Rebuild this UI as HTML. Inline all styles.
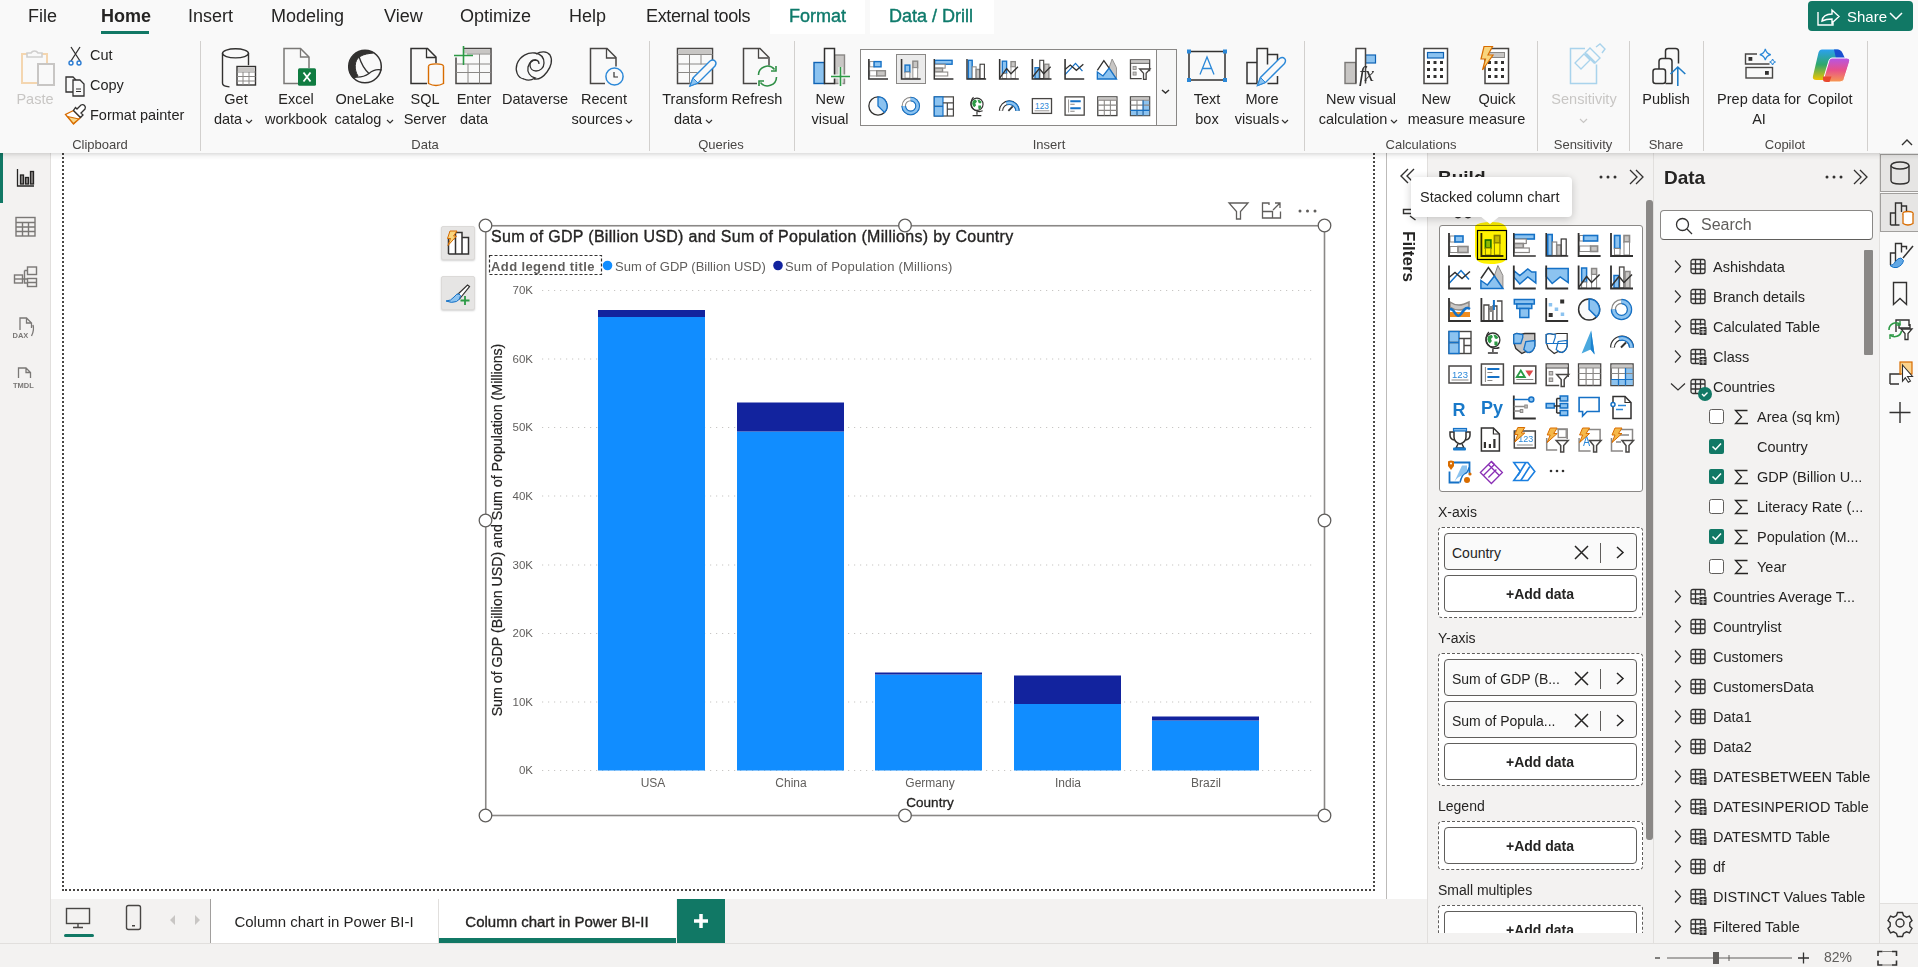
<!DOCTYPE html>
<html><head><meta charset="utf-8">
<style>
*{box-sizing:border-box;margin:0;padding:0}
html,body{width:1918px;height:967px;overflow:hidden;background:#f9f9f9;font-family:"Liberation Sans",sans-serif;color:#252423}
.a{position:absolute}
.t{position:absolute;white-space:nowrap;line-height:1}
.c{transform:translateX(-50%)}
svg{position:absolute;overflow:visible}
.tab{font-size:18px;top:7px;color:#252423}
.bl{font-size:14.5px;color:#252423}
.gl{font-size:13px;color:#484644;margin-top:1px}
.sep{position:absolute;top:41px;width:1px;height:110px;background:#d2d0ce}
.dt{font-size:14.5px;color:#252423}
.pill{background:#fafafa;border:1px solid #605e5c;border-radius:4px}
.add{background:#fff;border:1px solid #605e5c;border-radius:4px}
.chev{fill:none;stroke:#323130;stroke-width:1.2}
</style></head><body>
<!-- ribbon bg -->
<div class="a" style="left:0;top:0;width:1918px;height:153px;background:#f9f9f9"></div>
<div class="a" style="left:770px;top:0;width:95px;height:34px;background:#fff"></div>
<div class="a" style="left:870px;top:0;width:124px;height:34px;background:#fff"></div>
<div class="t tab" style="left:28px">File</div>
<div class="t tab" style="left:101px;font-weight:bold">Home</div>
<div class="a" style="left:101px;top:31px;width:48px;height:3px;background:#117865"></div>
<div class="t tab" style="left:188px">Insert</div>
<div class="t tab" style="left:271px">Modeling</div>
<div class="t tab" style="left:384px">View</div>
<div class="t tab" style="left:460px">Optimize</div>
<div class="t tab" style="left:569px">Help</div>
<div class="t tab" style="left:646px;letter-spacing:-.35px">External tools</div>
<div class="t tab" style="left:789px;color:#0e7a6b;-webkit-text-stroke:.4px #0e7a6b">Format</div>
<div class="t tab" style="left:889px;color:#0e7a6b;-webkit-text-stroke:.4px #0e7a6b">Data / Drill</div>
<!-- share -->
<div class="a" style="left:1808px;top:1px;width:105px;height:30px;background:#117865;border-radius:4px"></div>
<div class="t" style="left:1847px;top:9px;font-size:15px;color:#fff">Share</div>

<!-- separators -->
<div class="sep" style="left:200px"></div>
<div class="sep" style="left:649px"></div>
<div class="sep" style="left:794px"></div>
<div class="sep" style="left:1304px"></div>
<div class="sep" style="left:1537px"></div>
<div class="sep" style="left:1629px"></div>
<div class="sep" style="left:1703px"></div>
<div class="sep" style="left:1867px"></div>

<!-- group labels -->
<div class="t gl c" style="left:100px;top:137px">Clipboard</div>
<div class="t gl c" style="left:425px;top:137px">Data</div>
<div class="t gl c" style="left:721px;top:137px">Queries</div>
<div class="t gl c" style="left:1049px;top:137px">Insert</div>
<div class="t gl c" style="left:1421px;top:137px">Calculations</div>
<div class="t gl c" style="left:1583px;top:137px">Sensitivity</div>
<div class="t gl c" style="left:1666px;top:137px">Share</div>
<div class="t gl c" style="left:1785px;top:137px">Copilot</div>

<!-- button labels -->
<div class="t bl c" style="left:35px;top:92px;color:#c8c6c4">Paste</div>
<div class="t bl" style="left:90px;top:48px">Cut</div>
<div class="t bl" style="left:90px;top:78px">Copy</div>
<div class="t bl" style="left:90px;top:108px">Format painter</div>
<div class="t bl c" style="left:236px;top:92px">Get</div>
<div class="t bl c" style="left:228px;top:112px">data</div>
<div class="t bl c" style="left:296px;top:92px">Excel</div>
<div class="t bl c" style="left:296px;top:112px">workbook</div>
<div class="t bl c" style="left:365px;top:92px">OneLake</div>
<div class="t bl c" style="left:358px;top:112px">catalog</div>
<div class="t bl c" style="left:425px;top:92px">SQL</div>
<div class="t bl c" style="left:425px;top:112px">Server</div>
<div class="t bl c" style="left:474px;top:92px">Enter</div>
<div class="t bl c" style="left:474px;top:112px">data</div>
<div class="t bl c" style="left:535px;top:92px">Dataverse</div>
<div class="t bl c" style="left:604px;top:92px">Recent</div>
<div class="t bl c" style="left:597px;top:112px">sources</div>
<div class="t bl c" style="left:695px;top:92px">Transform</div>
<div class="t bl c" style="left:688px;top:112px">data</div>
<div class="t bl c" style="left:757px;top:92px">Refresh</div>
<div class="t bl c" style="left:830px;top:92px">New</div>
<div class="t bl c" style="left:830px;top:112px">visual</div>
<div class="t bl c" style="left:1207px;top:92px">Text</div>
<div class="t bl c" style="left:1207px;top:112px">box</div>
<div class="t bl c" style="left:1262px;top:92px">More</div>
<div class="t bl c" style="left:1257px;top:112px">visuals</div>
<div class="t bl c" style="left:1361px;top:92px">New visual</div>
<div class="t bl c" style="left:1353px;top:112px">calculation</div>
<div class="t bl c" style="left:1436px;top:92px">New</div>
<div class="t bl c" style="left:1436px;top:112px">measure</div>
<div class="t bl c" style="left:1497px;top:92px">Quick</div>
<div class="t bl c" style="left:1497px;top:112px">measure</div>
<div class="t bl c" style="left:1584px;top:92px;color:#c8c6c4">Sensitivity</div>
<div class="t bl c" style="left:1666px;top:92px">Publish</div>
<div class="t bl c" style="left:1759px;top:92px">Prep data for</div>
<div class="t bl c" style="left:1759px;top:112px">AI</div>
<div class="t bl c" style="left:1830px;top:92px">Copilot</div>

<svg width="1918" height="153" style="left:0;top:0" viewBox="0 0 1918 153">
<defs>
 <linearGradient id="cpA" x1="0" y1="0" x2="0" y2="1"><stop offset="0" stop-color="#2aa0f0"/><stop offset=".5" stop-color="#30a86a"/><stop offset="1" stop-color="#f2c400"/></linearGradient>
 <linearGradient id="cpB" x1="0" y1="0" x2="0" y2="1"><stop offset="0" stop-color="#b455e8"/><stop offset=".5" stop-color="#e8508a"/><stop offset="1" stop-color="#f79a50"/></linearGradient>
</defs>
<g fill="none" stroke-linejoin="miter">
 <!-- Paste -->
 <path d="M22 54h25v29H22z" stroke="#f4d6b0" stroke-width="2"/>
 <path d="M27 57h15v-4h-4a4 4 0 0 0-7 0h-4z" stroke="#d0cfce" stroke-width="1.6" fill="#f9f9f9"/>
 <path d="M38 64h16v21H38z" stroke="#c8c6c4" stroke-width="2" fill="#f9f9f9"/>
 <!-- Cut -->
 <path d="M71 47l9 14M80 47l-9 14" stroke="#323130" stroke-width="1.3"/>
 <circle cx="71" cy="63" r="2" stroke="#2b7cd3" stroke-width="1.4"/>
 <circle cx="79" cy="63" r="2" stroke="#2b7cd3" stroke-width="1.4"/>
 <!-- Copy -->
 <path d="M75 92h-9V77h7l3 3" stroke="#323130" stroke-width="1.3"/>
 <path d="M73 80h7l4 4v12H73z" stroke="#323130" stroke-width="1.3" fill="#f9f9f9"/>
 <path d="M76 89h5M76 91.5h5" stroke="#323130" stroke-width="1"/>
 <!-- Format painter -->
 <path d="M73.5 110.5L65.5 114.5L73.5 124L80.5 117.5z" fill="#fff" stroke="#d86c00" stroke-width="1.3"/>
 <path d="M67.5 116.5L79 119L73.5 123.5z" fill="#f8d98a" stroke="#d86c00" stroke-width="1.1"/>
 <path d="M73.5 110.5l7 7 2.5-2.5-2-2 4-4q1-2-.5-3.5t-3.5-.5l-4 4-1.5-1.5z" stroke="#323130" stroke-width="1.3" fill="#fff"/>
 <!-- Get data -->
 <ellipse cx="235.5" cy="53.3" rx="13" ry="4.6" stroke="#323130" stroke-width="1.4"/>
 <path d="M222.5 53.3v30q0 3 7 3.6M248.5 53.3v12" stroke="#323130" stroke-width="1.4"/>
 <rect x="237" y="66.5" width="18.5" height="18.5" fill="#fff" stroke="#323130" stroke-width="1.4"/>
 <rect x="238" y="67.5" width="16.5" height="3.5" fill="#c8c6c4"/>
 <path d="M237 72h18.5M237 76.5h18.5M237 81h18.5M243 72v13M249 72v13" stroke="#8a8886" stroke-width="1"/>
 <!-- Excel -->
 <path d="M300 83.5h-16V48.5h16.5l8.5 8.5v11" stroke="#7a7876" stroke-width="1.5"/>
 <path d="M300.5 48.5v8.5h8.5" stroke="#7a7876" stroke-width="1.3"/>
 <rect x="298" y="68.3" width="18" height="17.5" rx="1.5" fill="#107c41"/>
 <path d="M303.5 72.5l7 9M310.5 72.5l-7 9" stroke="#fff" stroke-width="1.8"/>
 <!-- OneLake -->
 <circle cx="365" cy="66.5" r="16.3" stroke="#323130" stroke-width="1.5"/>
 <path d="M373.5 52.5A16.5 16.5 0 0 0 353.5 78.2L358 76C354 70 354 60 360 56.5C364 54 369 53.5 373.5 53z" fill="#323130" stroke="#323130" stroke-width="1"/>
 <path d="M359 56.5C361 63 364 69 369 73.5M352 76.5C358 78 364 77 369 73.5C373 70 377 69 381.5 70" stroke="#323130" stroke-width="1.3"/>
 <!-- SQL server -->
 <path d="M427 83.5h-16V48.5h16.5l8.5 8.5v6" stroke="#323130" stroke-width="1.5"/>
 <path d="M426.5 48.5v9h9.5" stroke="#323130" stroke-width="1.3"/>
 <ellipse cx="436" cy="66.5" rx="7.5" ry="2.6" fill="#f9f9f9" stroke="#d86c00" stroke-width="1.4"/>
 <path d="M428.5 66.5v17q7.5 4 15 0v-17" fill="#f9f9f9" stroke="#d86c00" stroke-width="1.4"/>
 <!-- Enter data -->
 <path d="M463 48.5h28v35h-35v-26" stroke="#484644" stroke-width="1.5"/>
 <rect x="463" y="50" width="27" height="3.5" fill="#c8c6c4"/>
 <path d="M467 54h24M456 64h35M456 72.5h35M468 64v19.5M479.5 54v29.5" stroke="#8a8886" stroke-width="1"/>
 <path d="M454 55.5h19M463.5 46v19" stroke="#2c9a45" stroke-width="1.6"/>
 <!-- Dataverse -->
 <path d="M524 79c-7-1-9-9-7-15c3-8 11-12 18-11c6 1 9 5 9 10c0 5-4 8-8 8c-4 0-6-3-6-6s2-5 5-5s4 2 4 4" stroke="#323130" stroke-width="1.3"/>
 <path d="M524 79c4 2 8 1 11-1c-5-1-8-6-7-11c1-5 5-7 8-7M536 54c5-3 11-3 14 1c3 5 1 12-3 17c-3 4-8 8-13 7" stroke="#323130" stroke-width="1.3"/>
 <!-- Recent sources -->
 <path d="M605 83.5h-14.5V48.5h16.5l9 9v9" stroke="#484644" stroke-width="1.5"/>
 <path d="M606.5 48.5v9.5h9.5" stroke="#484644" stroke-width="1.3"/>
 <circle cx="614.5" cy="76.5" r="8.6" fill="#f9f9f9" stroke="#2b88d8" stroke-width="1.5"/>
 <path d="M614 72v5h4" stroke="#323130" stroke-width="1.2"/>
 <!-- Transform data -->
 <rect x="677.5" y="48.5" width="35" height="35" stroke="#484644" stroke-width="1.5"/>
 <rect x="679" y="50" width="32" height="4" fill="#c8c6c4"/>
 <path d="M677.5 54.5h35M677.5 64h30M677.5 72.5h20M689.5 54.5v29M701 54.5v10" stroke="#8a8886" stroke-width="1"/>
 <path d="M690 86l3-8 17-17q3-2 5 0t0 5l-17 17z" fill="#f9f9f9" stroke="#2b88d8" stroke-width="1.4"/>
 <path d="M690 86l3-8l5 5z" fill="#8cc3f0" stroke="#2b88d8" stroke-width="1"/>
 <!-- Refresh -->
 <path d="M757 83.5h-13.5V48.5h16.5l9 9v8" stroke="#484644" stroke-width="1.5"/>
 <path d="M758.5 48.5v9.5h9.5" stroke="#484644" stroke-width="1.3"/>
 <path d="M758.5 75a9 9 0 0 1 16-5.5M776.5 77a9 9 0 0 1-16 5.5" stroke="#2f8f46" stroke-width="1.6"/>
 <path d="M776 66v5h-5M759 86v-5h5" stroke="#2f8f46" stroke-width="1.6"/>
 <!-- New visual -->
 <rect x="814" y="62.5" width="10.5" height="21" fill="#8cc3f0" stroke="#0f63b5" stroke-width="1.4"/>
 <rect x="834.5" y="55" width="10" height="28.5" fill="#c8c6c4" stroke="#8a8886" stroke-width="1.4"/>
 <rect x="824.5" y="48.5" width="10" height="35" fill="#fff" stroke="#323130" stroke-width="1.5"/>
 <path d="M831 76.5h18M840.5 67v19" stroke="#f9f9f9" stroke-width="4"/>
 <path d="M831 76.5h19M840.5 67v19" stroke="#2c9a45" stroke-width="1.6"/>
 <!-- gallery -->
 <rect x="860.5" y="49.5" width="316" height="76" fill="#fff" stroke="#8a8886" stroke-width="1"/>
 <rect x="1157" y="50" width="19" height="75" fill="#f7f7f7"/>
 <path d="M1156.5 49.5v76" stroke="#8a8886" stroke-width="1"/>
 <path d="M1162 90l3.5 3 3.5-3" stroke="#323130" stroke-width="1.5"/>
 <rect x="896.5" y="54.5" width="29" height="29" fill="#ebebeb" stroke="#8a8886" stroke-width="1"/>
 <!-- Text box -->
 <rect x="1189" y="51.5" width="36" height="28.5" stroke="#323130" stroke-width="1.5"/>
 <path d="M1187 49.5h4v4h-4zM1223 49.5h4v4h-4zM1187 78h4v4h-4zM1223 78h4v4h-4z" fill="#2b88d8"/>
 <path d="M1200 74.5l7-17.5 7 17.5M1202.5 68.5h9" stroke="#2b88d8" stroke-width="1.3"/>
 <!-- More visuals -->
 <path d="M1257 83.5h-10V62.5h10M1257 83.5V48.5h10.5v6h10v12M1267.5 54.5v10M1277.5 76v7.5h-10" stroke="#323130" stroke-width="1.5"/>
 <path d="M1257.5 85.5l3-8l19-19q3-2 5 0t0 5l-19 19z" fill="#f9f9f9" stroke="#2b88d8" stroke-width="1.4"/>
 <path d="M1257.5 85.5l3-8l5 5z" fill="#8cc3f0" stroke="#2b88d8" stroke-width="1"/>
 <!-- New visual calc -->
 <rect x="1345" y="62.5" width="11" height="21" fill="#c8c6c4" stroke="#7a7876" stroke-width="1.4"/>
 <rect x="1365.5" y="55" width="10" height="8" fill="#8cc3f0" stroke="#0f63b5" stroke-width="1.2"/>
 <path d="M1356 83.5V48.5h9.5v35" fill="#fff" stroke="#484644" stroke-width="1.5"/>
 <text x="1359" y="81" font-family="Liberation Serif" font-style="italic" font-size="21" fill="#323130" stroke="none">fx</text>
 <!-- New measure -->
 <rect x="1424" y="48.5" width="23.5" height="35" fill="#fff" stroke="#484644" stroke-width="1.5"/>
 <rect x="1427.5" y="52.5" width="16" height="5.5" fill="#8cc3f0" stroke="#0f63b5" stroke-width="1.2"/>
 <path d="M1427 61h3v3h-3zM1433.5 61h3v3h-3zM1440 61h3v3h-3zM1427 68h3v3h-3zM1433.5 68h3v3h-3zM1440 68h3v3h-3zM1427 75h3v3h-3zM1433.5 75h3v3h-3zM1440 75h3v3h-3z" fill="#323130"/>
 <!-- Quick measure -->
 <rect x="1485" y="48.5" width="23.5" height="35" fill="#fff" stroke="#484644" stroke-width="1.5"/>
 <rect x="1488.5" y="52.5" width="16" height="5" fill="#c8c6c4" stroke="#8a8886" stroke-width="1"/>
 <path d="M1488 61h3v3h-3zM1494.5 61h3v3h-3zM1501 61h3v3h-3zM1488 68h3v3h-3zM1494.5 68h3v3h-3zM1501 68h3v3h-3zM1488 75h3v3h-3zM1494.5 75h3v3h-3zM1501 75h3v3h-3z" fill="#323130"/>
 <path d="M1484 46.5h8.5l-4.5 8.5h5l-10.5 15l3-11h-4.5z" fill="#f8d57e" stroke="#d86c00" stroke-width="1.2"/>
 <!-- Sensitivity -->
 <path d="M1585 48.5h-14.5v35h26v-19" stroke="#a9d3ec" stroke-width="1.5"/>
 <path d="M1575 63l9-9 6 6-9 9z" stroke="#a9d3ec" stroke-width="1.3"/>
 <path d="M1585 53l5-5 10 10-5 5zM1596 47l4-3 5 5-3 4" stroke="#a9d3ec" stroke-width="1.4"/>
 <path d="M1586 54l9 9" stroke="#a9d3ec" stroke-width="2.5"/>
 <!-- Publish -->
 <rect x="1653" y="69" width="12.5" height="14.5" rx="2.5" stroke="#323130" stroke-width="1.5"/>
 <path d="M1659 69v-7.5q0-3 3-3h7q3 0 3 3v22M1665.5 58.5v-7.5q0-2.5 3-2.5h7q3 0 3 3v12M1665.5 83.5h7" stroke="#323130" stroke-width="1.5"/>
 <path d="M1677.8 86V67M1670.5 74l7.3-7 7.5 7" stroke="#1f7dc7" stroke-width="1.6"/>
 <!-- Prep data for AI -->
 <path d="M1757 54h-11.5v10h24" stroke="#484644" stroke-width="1.4"/>
 <rect x="1746" y="67.5" width="26.5" height="10.5" stroke="#484644" stroke-width="1.4"/>
 <rect x="1748.5" y="57" width="3.8" height="3.8" fill="#323130"/>
 <rect x="1765" y="71" width="3.8" height="3.8" fill="#323130"/>
 <path d="M1765.3 49c.8 3.5 2 4.8 5.5 5.6c-3.5.8-4.7 2-5.5 5.6c-.8-3.6-2-4.8-5.5-5.6c3.5-.8 4.7-2.1 5.5-5.6z" stroke="#2b88d8" stroke-width="1.2"/>
 <path d="M1772.6 59c.4 2 1 2.6 3 3c-2 .4-2.6 1-3 3c-.4-2-1-2.6-3-3c2-.4 2.6-1 3-3z" stroke="#2b88d8" stroke-width="1.1"/>
 <!-- Copilot -->
 <path d="M1822 49.5H1837Q1841 49.5 1840 53.5L1833.5 77.5Q1832.5 80 1829.5 80H1816.5Q1812 80 1813 76L1818.5 52.5Q1819.5 49.5 1822 49.5z" fill="url(#cpA)"/>
 <path d="M1834 49.5H1837.5Q1841 49.5 1842.5 53L1845 58.5H1836z" fill="#1a4fd0"/>
 <path d="M1832 58H1846.5Q1850.5 58 1849.5 62L1844 79.5Q1843 82 1840 82H1826.5Q1823 82 1823.5 79L1829 60.5Q1830 58 1832 58z" fill="url(#cpB)" stroke="#fff" stroke-width="1"/>
 <path d="M1823 76.5H1831.5L1829.5 82H1826.5Q1822.5 82 1823 78.5z" fill="#e8492f"/>
 <!-- chevron up collapse -->
 <path d="M1902 145l5-5 5 5" stroke="#323130" stroke-width="1.4"/>
 <!-- dropdown chevrons -->
 <path d="M246 120l3 3 3-3M387 120l3 3 3-3M626 120l3 3 3-3M706 120l3 3 3-3M1282 120l3 3 3-3M1391 120l3 3 3-3" stroke="#323130" stroke-width="1.2"/>
 <path d="M1580 119l3.5 3.5 3.5-3.5" stroke="#c8c6c4" stroke-width="1.2"/>
 <!-- share icon -->
 <path d="M1818 12v13h15v-4M1822 21q1-7 10-7v-4l7 6.5-7 6.5v-4q-6 0-10 2z" stroke="#fff" stroke-width="1.4"/>
 <path d="M1890 13l6 6 6-6" stroke="#fff" stroke-width="1.5"/>
</g>
</svg>

<!-- ribbon shadow -->


<!-- left sidebar -->
<div class="a" style="left:0;top:153px;width:51px;height:792px;background:#f3f2f1;border-right:1px solid #e1dfdd"></div>
<div class="a" style="left:0;top:153px;width:3px;height:50px;background:#117865"></div>

<svg width="51" height="260" style="left:0;top:150px" viewBox="0 0 51 260">
 <g fill="none" stroke="#252423" stroke-width="1.3">
  <path d="M17.5 19v17h16.5"/>
  <rect x="20.5" y="25" width="3" height="9" fill="#8a8886"/>
  <rect x="25.5" y="27.5" width="3" height="6.5" fill="#8a8886"/>
  <rect x="30.5" y="21.5" width="3" height="12.5" fill="#8a8886"/>
 </g>
 <g fill="none" stroke="#7a7876" stroke-width="1.4">
  <rect x="16" y="67.5" width="19" height="18.5"/>
  <path d="M16 72.5h19M16 77h19M16 81.5h19M22.5 72.5v13.5M28.5 72.5v13.5"/>
  <g transform="translate(0,8)"><rect x="14.5" y="117" width="8" height="8"/><path d="M14.5 121h8"/><rect x="27.5" y="109" width="9" height="7.5"/><rect x="27.5" y="120.5" width="9" height="8"/><path d="M22.5 121h5M24.5 112.5h3M24.5 112.5v12.5h3M27.5 124.5h9"/></g>
 </g>
 <path d="M20 180v-12h6.5l5 5v5M26.5 168v5h5M33 175q1.5 5-1.5 11" fill="none" stroke="#7a7876" stroke-width="1.3"/>
 <text x="12.5" y="187.5" font-family="Liberation Sans" font-weight="bold" font-size="7.5" fill="#7a7876">DAX</text>
 <path d="M18.5 228v-10h7.5l4.5 4.5v5.5M26 218v4.5h4.5" fill="none" stroke="#7a7876" stroke-width="1.3"/>
 <text x="13" y="237.5" font-family="Liberation Sans" font-weight="bold" font-size="7.5" fill="#7a7876">TMDL</text>
</svg>
<!-- canvas -->
<div class="a" style="left:51px;top:153px;width:1336px;height:746px;background:#fff"></div>
<div class="a" style="left:62px;top:153px;width:1313px;height:738px;border:2px dotted #484644;border-top:none"></div>

<!-- bottom page tabs -->
<div class="a" style="left:51px;top:899px;width:1377px;height:46px;background:#f3f2f1"></div>


<!-- filters pane -->
<div class="a" style="left:1386px;top:153px;width:1px;height:746px;background:#bdbbb9"></div>
<div class="a" style="left:1387px;top:153px;width:40px;height:746px;background:#fff"></div>

<!-- build pane -->
<div class="a" style="left:1427px;top:153px;width:226px;height:792px;background:#f3f2f1;border-left:1px solid #e1dfdd"></div>
<!-- data pane -->
<div class="a" style="left:1653px;top:153px;width:227px;height:792px;background:#f3f2f1;border-left:1px solid #e1dfdd"></div>
<!-- right icon rail -->
<div class="a" style="left:1879px;top:153px;width:39px;height:792px;background:#fafafa;border-left:1px solid #e1dfdd"></div>

<svg width="0" height="0" style="position:absolute;left:0;top:0">
<defs>
<g id="i-sbar" fill="none" stroke-width="1.6">
 <rect x="2" y="3" width="5" height="6" fill="#fff" stroke="#8a8886" stroke-width="1"/>
 <rect x="7" y="3" width="8" height="6" fill="#8cc3f0" stroke="#1571c6"/>
 <rect x="2" y="13.5" width="8" height="6" fill="#fff" stroke="#8a8886" stroke-width="1"/>
 <rect x="10" y="13.5" width="10" height="6" fill="#c8c6c4" stroke="#8a8886"/>
 <path d="M1 0v23h22" stroke="#323130" stroke-width="1.8"/>
</g>
<g id="i-scol" fill="none" stroke-width="1.6">
 <rect x="5" y="7" width="5.5" height="8" fill="#8cc3f0" stroke="#1571c6"/>
 <rect x="5" y="15" width="5.5" height="7" fill="#fff" stroke="#8a8886" stroke-width="1"/>
 <rect x="14" y="2.5" width="5.5" height="7.5" fill="#c8c6c4" stroke="#8a8886"/>
 <rect x="14" y="10" width="5.5" height="12" fill="#fff" stroke="#8a8886" stroke-width="1"/>
 <path d="M1 0v23h22" stroke="#323130" stroke-width="1.8"/>
</g>
<g id="i-cbar" fill="none" stroke-width="1.6">
 <rect x="1.5" y="1.5" width="20" height="4.5" fill="#8cc3f0" stroke="#1571c6"/>
 <rect x="1.5" y="6" width="12" height="4.5" fill="#fff" stroke="#8a8886" stroke-width="1.2"/>
 <rect x="1.5" y="10.5" width="9" height="4.5" fill="#c8c6c4" stroke="#8a8886"/>
 <rect x="1.5" y="15" width="15" height="4.5" fill="#fff" stroke="#8a8886" stroke-width="1.2"/>
 <path d="M1 0v23h22" stroke="#323130" stroke-width="1.6"/>
</g>
<g id="i-ccol" fill="none" stroke-width="1.6">
 <rect x="2.5" y="1.5" width="4.5" height="21" fill="#8cc3f0" stroke="#1571c6"/>
 <rect x="7" y="9" width="4.5" height="13.5" fill="#fff" stroke="#8a8886" stroke-width="1.2"/>
 <rect x="11.5" y="12" width="4.5" height="10.5" fill="#c8c6c4" stroke="#8a8886"/>
 <rect x="16" y="6" width="5" height="16.5" fill="#fff" stroke="#323130" stroke-width="1.2"/>
 <path d="M1 0v23h22" stroke="#323130" stroke-width="1.6"/>
</g>
<g id="i-pbar" fill="none" stroke-width="1.6">
 <rect x="2" y="2.5" width="4" height="5.5" fill="#fff" stroke="#8a8886" stroke-width="1"/>
 <rect x="6" y="2.5" width="14" height="5.5" fill="#8cc3f0" stroke="#1571c6"/>
 <rect x="2" y="13" width="11" height="5.5" fill="#fff" stroke="#8a8886" stroke-width="1"/>
 <rect x="13" y="13" width="7" height="5.5" fill="#c8c6c4" stroke="#8a8886"/>
 <path d="M1 0v23h22" stroke="#323130" stroke-width="1.8"/>
</g>
<g id="i-pcol" fill="none" stroke-width="1.6">
 <rect x="4.5" y="2.5" width="5.5" height="13" fill="#8cc3f0" stroke="#1571c6"/>
 <rect x="4.5" y="15.5" width="5.5" height="6.5" fill="#fff" stroke="#8a8886" stroke-width="1"/>
 <rect x="14" y="2.5" width="5.5" height="6.5" fill="#c8c6c4" stroke="#8a8886"/>
 <rect x="14" y="9" width="5.5" height="13" fill="#fff" stroke="#8a8886" stroke-width="1"/>
 <path d="M1 0v23h22" stroke="#323130" stroke-width="1.8"/>
</g>
<g id="i-line" fill="none" stroke-width="1.5">
 <path d="M1 18l12-13 8 9" stroke="#1571c6"/>
 <path d="M1 12l6-5 7 6 8-7" stroke="#323130"/>
 <path d="M1 0v23h22" stroke="#323130" stroke-width="1.8"/>
</g>
<g id="i-area" fill="none" stroke-width="1.5">
 <path d="M14 10l3.5-10 5 10v13z" fill="#c8c6c4" stroke="#8a8886" stroke-width="1"/>
 <path d="M0.5 13l7.5-11 6.5 9" fill="#fff" stroke="#323130"/>
 <path d="M0.5 15l6.5 4.5 7-9 8.5 12.5h-22z" fill="#8cc3f0" stroke="#1571c6"/>
</g>
<g id="i-sarea" fill="none" stroke-width="1.5">
 <path d="M1 5l6 5 8-6.5 4 3h4v11l-8-6-8 7-6-7z" fill="#8cc3f0" stroke="#1571c6"/>
 <path d="M1 0v23h22" stroke="#323130" stroke-width="1.8"/>
</g>
<g id="i-parea" fill="none" stroke-width="1.5">
 <path d="M1 3h22v14l-8-5.5-8 6.5-6-7z" fill="#8cc3f0" stroke="#1571c6"/>
 <path d="M1 0v23h22" stroke="#323130" stroke-width="1.8"/>
</g>
<g id="i-lscol" fill="none" stroke-width="1.5">
 <rect x="4" y="2.5" width="5" height="14" fill="#8cc3f0" stroke="#1571c6"/>
 <rect x="4" y="16.5" width="5" height="6" fill="#fff" stroke="#8a8886" stroke-width="1"/>
 <rect x="14" y="3" width="5" height="6" fill="#c8c6c4" stroke="#8a8886"/>
 <rect x="14" y="9" width="5" height="13.5" fill="#fff" stroke="#8a8886" stroke-width="1"/>
 <path d="M1 22l8-11 5 6 8-8" stroke="#323130"/>
 <path d="M1 0v23h22" stroke="#323130" stroke-width="1.8"/>
</g>
<g id="i-lccol" fill="none" stroke-width="1.5">
 <rect x="4" y="10" width="5" height="12.5" fill="#8cc3f0" stroke="#1571c6"/>
 <rect x="9.5" y="1.5" width="4.5" height="21" fill="#fff" stroke="#484644" stroke-width="1.3"/>
 <rect x="15" y="6" width="5" height="16.5" fill="#c8c6c4" stroke="#8a8886"/>
 <path d="M1 21l8-10 5 6 8-8" stroke="#323130"/>
 <path d="M1 0v23h22" stroke="#323130" stroke-width="1.8"/>
</g>
<g id="i-ribbon" fill="none" stroke-width="1.5">
 <path d="M2 4q4 3 9 3q4 0 10-3v5q-6 3-10 3q-5 0-9-3z" fill="#c8c6c4" stroke="#8a8886"/>
 <path d="M2 14h20v5h-20z" fill="#f08c1e"/>
 <path d="M2 11q3 0 5 4q3 5 6 1q2-3 4-5t5 0" stroke="#1571c6" stroke-width="2.5"/>
 <path d="M1 0v23h22" stroke="#323130" stroke-width="1.8"/>
</g>
<g id="i-water" fill="none" stroke-width="1.5">
 <path d="M3.5 22.5V7h5v15.5M8.5 22.5V11h4v11.5M12.5 11V8h4v14.5M16.5 3h5v19.5" stroke="#484644" stroke-width="1.3" fill="#fff"/>
 <rect x="9" y="8" width="3.5" height="6" fill="#8a8886"/>
 <path d="M13.5 2v10" stroke="#1571c6" stroke-width="2"/>
 <path d="M1 0v23h22" stroke="#323130" stroke-width="1.8"/>
</g>
<g id="i-funnel" stroke="#1571c6" stroke-width="1.5" fill="#8cc3f0">
 <rect x="1.5" y="1.5" width="20" height="4.5"/>
 <rect x="4" y="6" width="15" height="4.5"/>
 <rect x="7" y="10.5" width="9" height="9"/>
</g>
<g id="i-scatter" fill="none">
 <rect x="15" y="1.5" width="4" height="4" fill="#323130"/>
 <rect x="3.5" y="15" width="4" height="4" fill="#323130"/>
 <rect x="3.5" y="5" width="3.5" height="3.5" fill="#8cc3f0"/>
 <rect x="9.5" y="9.5" width="3.5" height="3.5" fill="#8cc3f0"/>
 <rect x="15.5" y="14.5" width="3.5" height="3.5" fill="#8cc3f0"/>
 <path d="M1 0v23h22" stroke="#323130" stroke-width="1.8"/>
</g>
<g id="i-pie" stroke-width="1.5">
 <circle cx="11.5" cy="11.5" r="10.5" fill="#fafafa" stroke="#323130"/>
 <path d="M11.5 1a10.5 10.5 0 0 1 7.4 17.9L11.5 11.5z" fill="#8cc3f0" stroke="#1571c6"/>
</g>
<g id="i-donut" fill="none">
 <circle cx="11.5" cy="11.5" r="8" stroke="#8a8886" stroke-width="5"/>
 <circle cx="11.5" cy="11.5" r="8" stroke="#fff" stroke-width="2.5"/>
 <path d="M11.5 3.5a8 8 0 1 1-8 8" stroke="#1571c6" stroke-width="5.5"/>
 <path d="M11.5 3.5a8 8 0 1 1-8 8" stroke="#8cc3f0" stroke-width="3"/>
</g>
<g id="i-treemap" stroke-width="1.4">
 <rect x="1" y="1" width="22" height="22" fill="#fff" stroke="#484644"/>
 <rect x="1" y="1" width="10" height="22" fill="#8cc3f0" stroke="#1571c6"/>
 <path d="M1 12h10M11 8h12M16 8v15M16 15h7" stroke="#484644" fill="none"/>
 <path d="M1 12h10" stroke="#1571c6"/>
</g>
<g id="i-globe" fill="none" stroke="#323130" stroke-width="1.4">
 <circle cx="12.5" cy="9.5" r="7" fill="#fff" stroke="#323130" stroke-width="1.3"/>
 <path d="M7.5 6q2-2 4-1.5l1 2-2 2 1 2-2 2.5q-2-1-2.5-4z M13 4q3 0 5 3l-1.5 1.5-2-.5z M14 11l3 0q1 2-1 4.5l-2-1z" fill="#2c9a45" stroke="none"/>
 <path d="M8.5 1.5a9.5 9.5 0 0 0 10.5 15.5M12.5 18.5v3M7.5 22.5h10"/>
</g>
<g id="i-fmap" stroke-width="1.3">
 <path d="M1 4l3-1 4 1 4-1 10 0v12q-1 5-5 7l-4-1-4 2-6-5-2-6z" fill="#c8c6c4" stroke="#323130"/>
 <path d="M1 4l3-1 6 1 0 3-2 6h-7z" fill="#8cc3f0" stroke="#1571c6"/>
 <path d="M22 10v6q-2 6-7 6l-4-3 2-8z" fill="#8cc3f0" stroke="#1571c6"/>
</g>
<g id="i-smap" stroke-width="1.2" fill="#fff">
 <path d="M1 4l3-1 4 1 4-1 10 0v12q-1 5-5 7l-4-1-4 2-6-5-2-6z" stroke="#323130"/>
 <path d="M1 4l3-1 6 1 0 3-2 6h-7zM22 10v6q-2 6-7 6l-4-3 2-8zM1 13h21" stroke="#1571c6" fill="none"/>
</g>
<g id="i-azmap">
 <path d="M13.5 0l3.5 24-4-5-9 4z" fill="#4aa8de"/>
 <path d="M13.5 0l3.5 24-4-5z" fill="#1c82d0"/>
</g>
<g id="i-gauge" fill="none">
 <path d="M2.5 17a9.5 9.5 0 0 1 19 0" stroke="#323130" stroke-width="5"/>
 <path d="M2.5 17a9.5 9.5 0 0 1 19 0" stroke="#fff" stroke-width="2.6"/>
 <path d="M9 8.3a9.5 9.5 0 0 1 12.5 8.7" stroke="#1571c6" stroke-width="5"/>
 <path d="M9 8.3a9.5 9.5 0 0 1 12.5 8.7" stroke="#8cc3f0" stroke-width="2.6"/>
 <path d="M11 17l5-5" stroke="#323130" stroke-width="2"/>
</g>
<g id="i-card" fill="none">
 <rect x="1" y="3" width="22" height="17" fill="#fff" stroke="#484644" stroke-width="1.5"/>
 <text x="12" y="14.5" font-family="Liberation Sans" font-size="9.5" fill="#2b88d8" text-anchor="middle">123</text>
 <path d="M3.5 17h17" stroke="#8a8886" stroke-width="1"/>
</g>
<g id="i-mcard" fill="none">
 <rect x="1" y="1" width="22" height="21" fill="#fff" stroke="#484644" stroke-width="1.5"/>
 <path d="M5 4v15" stroke="#8a8886" stroke-width="1"/>
 <path d="M7 6h12M7 14h12" stroke="#1571c6" stroke-width="2.2"/>
 <path d="M7 9.5h5M7 17.5h5" stroke="#8a8886" stroke-width="1.2"/>
</g>
<g id="i-kpi" fill="none">
 <rect x="1" y="3" width="22" height="17.5" fill="#fff" stroke="#484644" stroke-width="1.5"/>
 <path d="M4 14l4-6.5 4 6.5z" fill="#fff" stroke="#2c9a45" stroke-width="1.8"/>
 <path d="M12.5 7.5h8l-4 6z" fill="#e04a4a"/>
 <path d="M3.5 16.5h17" stroke="#8a8886" stroke-width="1"/>
</g>
<g id="i-slicer" fill="none">
 <path d="M14 22.5H1V1h22v13" fill="#fff" stroke="#484644" stroke-width="1.5"/>
 <rect x="1.5" y="1.5" width="21" height="3" fill="#c8c6c4"/>
 <path d="M1 5h22" stroke="#484644" stroke-width="1"/>
 <rect x="4" y="8.5" width="3.5" height="3.5" fill="#c8c6c4" stroke="#8a8886" stroke-width="1"/>
 <rect x="4" y="15" width="3.5" height="3.5" fill="#c8c6c4" stroke="#8a8886" stroke-width="1"/>
 <path d="M11.5 11.5h12l-4.5 5v7h-3v-7z" fill="#fff" stroke="#484644" stroke-width="1.5"/>
</g>
<g id="i-table" fill="none">
 <rect x="1" y="1" width="22" height="21.5" fill="#fff" stroke="#484644" stroke-width="1.5"/>
 <rect x="1.5" y="1.5" width="21" height="3.5" fill="#c8c6c4"/>
 <path d="M1 5h22M1 10.5h22M1 16.5h22M8.5 5v17.5M15.5 5v17.5" stroke="#8a8886" stroke-width="1.2"/>
</g>
<g id="i-matrix" fill="none">
 <rect x="1" y="1" width="22" height="21.5" fill="#fff" stroke="#484644" stroke-width="1.5"/>
 <rect x="1.5" y="1.5" width="21" height="3.5" fill="#c8c6c4"/>
 <rect x="15.5" y="5" width="7" height="17" fill="#8cc3f0"/>
 <rect x="1.5" y="16.5" width="21" height="5.5" fill="#8cc3f0"/>
 <path d="M1 5h22M1 10.5h22M1 16.5h22M8.5 5v17.5M15.5 5v17.5" stroke="#8a8886" stroke-width="1.2"/>
 <path d="M1 16.5h22M15.5 5v17.5M8.5 16.5v6M1 10.5" stroke="#1571c6" stroke-width="1.2"/>
</g>
<g id="i-r"><text x="11" y="20" font-family="Liberation Sans" font-weight="bold" font-size="18" fill="#1979c9" text-anchor="middle">R</text></g>
<g id="i-py"><text x="11.5" y="18.5" font-family="Liberation Sans" font-weight="bold" font-size="18" fill="#1979c9" text-anchor="middle">Py</text></g>
<g id="i-keyinf" fill="none">
 <path d="M1 0v23h22" stroke="#323130" stroke-width="1.8"/>
 <path d="M1 4h15" stroke="#1571c6" stroke-width="1.5"/>
 <circle cx="18.5" cy="4" r="2.5" fill="#8cc3f0" stroke="#1571c6" stroke-width="1.5"/>
 <path d="M1 11h11M1 15.5h7" stroke="#8a8886" stroke-width="1.3"/>
 <rect x="12" y="9.5" width="2.5" height="3" fill="#c8c6c4" stroke="#8a8886" stroke-width="1"/>
 <rect x="7.5" y="14" width="2.5" height="3" fill="#c8c6c4" stroke="#8a8886" stroke-width="1"/>
</g>
<g id="i-decomp" stroke="#1571c6" stroke-width="1.5" fill="#8cc3f0">
 <rect x="1" y="8" width="8" height="4.5"/>
 <rect x="15" y="0.5" width="7.5" height="5"/>
 <rect x="15" y="8" width="7.5" height="4.5"/>
 <rect x="15" y="15" width="7.5" height="5"/>
 <path d="M9 10.5h2.5M11.5 3v14.5M11.5 3h3.5M11.5 10.5h3.5M11.5 17.5h3.5" stroke="#323130" fill="none"/>
</g>
<g id="i-qna"><path d="M1.5 2h20v14h-12l-4.5 4.5v-4.5h-3.5z" fill="#fff" stroke="#1571c6" stroke-width="1.6"/></g>
<g id="i-narr" fill="none">
 <path d="M3 1h12l6 6v16h-18z" fill="#fff" stroke="#323130" stroke-width="1.5"/>
 <path d="M15 1v6h6" stroke="#323130" stroke-width="1.2"/>
 <circle cx="3" cy="9" r="2" fill="#fff" stroke="#1571c6" stroke-width="1.5"/>
 <path d="M8 10h8M6 14h7" stroke="#2b88d8" stroke-width="1.3"/>
</g>
<g id="i-trophy" fill="none">
 <path d="M6 2h12v7q0 5-6 7q-6-2-6-7z" fill="#fff" stroke="#323130" stroke-width="1.5"/>
 <path d="M6 4h-4v3q0 4 4 5M18 4h4v3q0 4-4 5" stroke="#323130" stroke-width="1.5"/>
 <rect x="5.5" y="0.5" width="13" height="2.5" fill="#8cc3f0" stroke="#1571c6" stroke-width="1.2"/>
 <path d="M10 16l-2 4h8l-2-4" stroke="#323130" stroke-width="1.5"/>
 <rect x="5" y="19.5" width="13" height="3" rx="1" fill="#1979c9"/>
</g>
<g id="i-pagin" fill="none">
 <path d="M1 0h12l6 6v17h-18z" fill="#fff" stroke="#323130" stroke-width="1.5"/>
 <path d="M13 0v6h6" stroke="#323130" stroke-width="1.2"/>
 <path d="M4.5 20v-6M9.5 20v-4M14 20v-9" stroke="#323130" stroke-width="2.2"/>
</g>
<g id="i-bolt"><path d="M5 0h7l-3.5 5.5h3.5l-10 9l3-7.5h-3z" fill="#f5b84a" stroke="#d86c00" stroke-width="1"/></g>
<g id="i-ncard" fill="none">
 <rect x="1.5" y="3" width="21" height="17" fill="#fff" stroke="#484644" stroke-width="1.5"/>
 <text x="13" y="14" font-family="Liberation Sans" font-size="9" fill="#2b88d8" text-anchor="middle">123</text>
 <path d="M4 17h16" stroke="#8a8886" stroke-width="1"/>
 <use href="#i-bolt" x="0" y="-0.5"/>
</g>
<g id="i-nslicer" fill="none">
 <path d="M12 22H1.5V10M12 1h10v10" stroke="#8a8886" stroke-width="1.5"/>
 <rect x="13" y="1.5" width="8" height="8" fill="#fff" stroke="#8a8886" stroke-width="1.3"/>
 <path d="M11 12.5h12l-4.5 5v6.5h-3v-6.5z" fill="#fff" stroke="#484644" stroke-width="1.5"/>
 <use href="#i-bolt" x="0" y="0"/>
</g>
<g id="i-bslicer" fill="none">
 <path d="M13 23H1.5V10M10 1.5h12.5v11" stroke="#8a8886" stroke-width="1.5"/>
 <path d="M6 18l3-10 3 10M7 14.5h4" stroke="#2b88d8" stroke-width="1"/>
 <path d="M12 12.5h11.5l-4.5 5v6.5h-3v-6.5z" fill="#fff" stroke="#484644" stroke-width="1.5"/>
 <use href="#i-bolt" x="0" y="0"/>
</g>
<g id="i-lslicer" fill="none">
 <path d="M13 23H1.5V10M10 1.5h12.5v11" stroke="#8a8886" stroke-width="1.5"/>
 <path d="M10 7h9M6 14h5" stroke="#8a8886" stroke-width="1.3"/>
 <path d="M12 12.5h11.5l-4.5 5v6.5h-3v-6.5z" fill="#fff" stroke="#484644" stroke-width="1.5"/>
 <use href="#i-bolt" x="0" y="0"/>
</g>
<g id="i-arcgis">
 <path d="M1.5 2h20v11M1.5 11v11h10" fill="none" stroke="#1571c6" stroke-width="1.8"/>
 <path d="M12 22q2-8 5-9t4-6" fill="none" stroke="#1571c6" stroke-width="1.5"/>
 <path d="M6 22q3-5 6-6t7-6v-5h-5z" fill="#8cc3f0"/>
 <path d="M0 1.5q0-1.5 3-1.5t3 1.5v4l-3 4-3-4z" fill="#d86c00"/>
 <circle cx="3" cy="3" r="1" fill="#fff"/>
 <circle cx="19" cy="19.5" r="3" fill="#d86c00"/>
 <circle cx="22" cy="13.5" r="1.6" fill="#d86c00"/>
</g>
<g id="i-papps" fill="none" stroke="#8a2fb5" stroke-width="1.3">
 <path d="M11 1l11 11-11 11-11-11z"/>
 <path d="M8 4l11 11M14 4L3 15M11 1l3 3M16 9l-8 8"/>
</g>
<g id="i-pauto" fill="none" stroke="#1a7fe0" stroke-width="1.6">
 <path d="M1 2h14l7 9-7 9h-14l6.5-9z"/>
 <path d="M13 2l-8 13M17 6l-9 14"/>
</g>
<g id="d-tbl" fill="none" stroke="#323130" stroke-width="1.3">
 <rect x="1" y="1" width="14" height="14" rx="2"/>
 <path d="M1 5.5h14M1 10.5h14M5.5 1v14M10.5 1v14"/>
</g>
<g id="d-calc" fill="none" stroke="#323130" stroke-width="1.3">
 <path d="M9 15H3q-2 0-2-2V3q0-2 2-2h10q2 0 2 2v5"/>
 <path d="M1 5.5h14M1 10.5h8M5.5 1v14M10.5 1v6"/>
 <rect x="9.5" y="8.5" width="7" height="8" fill="#323130" stroke="none"/>
 <path d="M10.5 11h5M10.5 13.5h5M13 9.5v6.5" stroke="#fff" stroke-width=".8"/>
</g>
</defs>
</svg>
<!-- CANVAS CHART -->
<svg width="1918" height="967" style="left:0;top:0" viewBox="0 0 1918 967">
 <!-- gridlines -->
 <g stroke="#c8c6c4" stroke-width="1.2" stroke-dasharray="1.2 4.8" fill="none">
  <path d="M542 290.5H1316M542 359H1316M542 427.5H1316M542 496H1316M542 565H1316M542 633.5H1316M542 702H1316M542 770.5H1316"/>
 </g>
 <!-- bars -->
 <g>
  <rect x="598" y="317" width="107" height="453.5" fill="#118dff"/>
  <rect x="598" y="310" width="107" height="7" fill="#12239e"/>
  <rect x="737" y="431.5" width="107" height="339" fill="#118dff"/>
  <rect x="737" y="402.5" width="107" height="29" fill="#12239e"/>
  <rect x="875" y="674.5" width="107" height="96" fill="#118dff"/>
  <rect x="875" y="672.5" width="107" height="2" fill="#12239e"/>
  <rect x="1014" y="704" width="107" height="66.5" fill="#118dff"/>
  <rect x="1014" y="675.5" width="107" height="28.5" fill="#12239e"/>
  <rect x="1152" y="720.5" width="107" height="50" fill="#118dff"/>
  <rect x="1152" y="716.5" width="107" height="4" fill="#12239e"/>
 </g>
 <!-- frame -->
 <rect x="485.75" y="225.75" width="838.75" height="589.75" fill="none" stroke="#8a8886" stroke-width="1.6"/>
 <g fill="#fff" stroke="#605e5c" stroke-width="1.3">
  <circle cx="485.5" cy="225.5" r="6.3"/><circle cx="905" cy="225.5" r="6.3"/><circle cx="1324.5" cy="225.5" r="6.3"/>
  <circle cx="485.5" cy="520.5" r="6.3"/><circle cx="1324.5" cy="520.5" r="6.3"/>
  <circle cx="485.5" cy="815.5" r="6.3"/><circle cx="905" cy="815.5" r="6.3"/><circle cx="1324.5" cy="815.5" r="6.3"/>
 </g>
 <!-- legend -->
 <rect x="489.5" y="255.5" width="112" height="19" fill="none" stroke="#323130" stroke-width="1.2" stroke-dasharray="3 2"/>
 <circle cx="607.5" cy="265.5" r="4.8" fill="#118dff"/>
 <circle cx="778" cy="265.5" r="4.8" fill="#12239e"/>
 <!-- visual header icons -->
 <g fill="none" stroke="#605e5c" stroke-width="1.3">
  <path d="M1229 203h19l-7.5 8.5v7.5h-4v-7.5z"/>
  <path d="M1269 205v-2h-6.5v15h18v-6.5M1262.5 211.5h10v6.5M1273 210l7-7M1275 203h5v5"/>
 </g>
 <g fill="#605e5c"><circle cx="1300" cy="211" r="1.5"/><circle cx="1307.5" cy="211" r="1.5"/><circle cx="1315" cy="211" r="1.5"/></g>
</svg>
<div class="t" style="left:491px;top:229px;font-size:16px;color:#252423;letter-spacing:.3px;-webkit-text-stroke:.35px #252423">Sum of GDP (Billion USD) and Sum of Population (Millions) by Country</div>
<div class="t" style="left:491px;top:260px;font-size:13px;font-weight:bold;color:#605e5c;letter-spacing:.4px">Add legend title</div>
<div class="t" style="left:615px;top:260px;font-size:13px;color:#605e5c">Sum of GDP (Billion USD)</div>
<div class="t" style="left:785px;top:260px;font-size:13px;color:#605e5c;letter-spacing:.2px">Sum of Population (Millions)</div>
<div class="a" style="left:440px;top:290px;width:0;height:0"></div>
<div class="t" style="right:1385px;top:285px;font-size:11.5px;color:#605e5c">70K</div>
<div class="t" style="right:1385px;top:353.5px;font-size:11.5px;color:#605e5c">60K</div>
<div class="t" style="right:1385px;top:422px;font-size:11.5px;color:#605e5c">50K</div>
<div class="t" style="right:1385px;top:490.5px;font-size:11.5px;color:#605e5c">40K</div>
<div class="t" style="right:1385px;top:559.5px;font-size:11.5px;color:#605e5c">30K</div>
<div class="t" style="right:1385px;top:628px;font-size:11.5px;color:#605e5c">20K</div>
<div class="t" style="right:1385px;top:696.5px;font-size:11.5px;color:#605e5c">10K</div>
<div class="t" style="right:1385px;top:765px;font-size:11.5px;color:#605e5c">0K</div>
<div class="t c" style="left:653px;top:777px;font-size:12px;color:#605e5c">USA</div>
<div class="t c" style="left:791px;top:777px;font-size:12px;color:#605e5c">China</div>
<div class="t c" style="left:930px;top:777px;font-size:12px;color:#605e5c">Germany</div>
<div class="t c" style="left:1068px;top:777px;font-size:12px;color:#605e5c">India</div>
<div class="t c" style="left:1206px;top:777px;font-size:12px;color:#605e5c">Brazil</div>
<div class="t c" style="left:930px;top:795.5px;font-size:13.5px;color:#252423;-webkit-text-stroke:.3px #252423">Country</div>
<div class="t" style="left:497px;top:529.5px;font-size:14.2px;color:#252423;-webkit-text-stroke:.2px #252423;transform:translate(-50%,-50%) rotate(-90deg)">Sum of GDP (Billion USD) and Sum of Population (Millions)</div>

<!-- floating buttons left of visual -->
<div class="a" style="left:441px;top:226px;width:34px;height:34px;background:#e6e5e4;border:1px solid #dcdad8;border-radius:2px;box-shadow:0 1px 2px rgba(0,0,0,.18)"></div>
<div class="a" style="left:441px;top:276px;width:34px;height:34px;background:#e6e5e4;border:1px solid #dcdad8;border-radius:2px;box-shadow:0 1px 2px rgba(0,0,0,.18)"></div>
<svg width="40" height="90" style="left:440px;top:224px" viewBox="0 0 40 90">
 <path d="M8.5 30V14.5h7v15.5M15.5 30V8.5h6.5v21.5M22 30V13.5h6.5v16.5zM8.5 30h20" fill="#fff" stroke="#323130" stroke-width="1.5"/>
 <path d="M10 7h7l-3.5 5h3l-8.5 9.5 2.5-7h-3z" fill="#f8d57e" stroke="#d86c00" stroke-width="1"/>
 <path d="M29.5 62.5l-2-1.5-11.5 11 3.5 3z" fill="#fff" stroke="#323130" stroke-width="1.2"/>
 <path d="M6 77q5 0 8-4t5-3l1.5 1.5q0 4-4 6q-5 2-10.5-.5z" fill="#8cc3f0" stroke="#1571c6" stroke-width="1"/>
 <path d="M20.5 76.5h9M25 72v9" stroke="#2c9a45" stroke-width="1.8"/>
</svg>
<div class="a" style="left:1439px;top:225px;width:204px;height:267px;background:#fff;border:1px solid #8a8886;border-radius:3px"></div>
<svg width="1918" height="967" style="left:0;top:0" viewBox="0 0 1918 967">

<rect x="1477.5" y="230.5" width="29" height="29" fill="none" stroke="#000" stroke-width="1.2"/>
<use href="#i-sbar" transform="translate(1448,233)"/>
<use href="#i-scol" transform="translate(1480.4,233)"/>
<use href="#i-cbar" transform="translate(1512.8,233)"/>
<use href="#i-ccol" transform="translate(1545.2,233)"/>
<use href="#i-pbar" transform="translate(1577.6,233)"/>
<use href="#i-pcol" transform="translate(1610,233)"/>
<use href="#i-line" transform="translate(1448,265.5)"/>
<use href="#i-area" transform="translate(1480.4,265.5)"/>
<use href="#i-sarea" transform="translate(1512.8,265.5)"/>
<use href="#i-parea" transform="translate(1545.2,265.5)"/>
<use href="#i-lscol" transform="translate(1577.6,265.5)"/>
<use href="#i-lccol" transform="translate(1610,265.5)"/>
<use href="#i-ribbon" transform="translate(1448,298)"/>
<use href="#i-water" transform="translate(1480.4,298)"/>
<use href="#i-funnel" transform="translate(1512.8,298)"/>
<use href="#i-scatter" transform="translate(1545.2,298)"/>
<use href="#i-pie" transform="translate(1577.6,298)"/>
<use href="#i-donut" transform="translate(1610,298)"/>
<use href="#i-treemap" transform="translate(1448,330.5)"/>
<use href="#i-globe" transform="translate(1480.4,330.5)"/>
<use href="#i-fmap" transform="translate(1512.8,330.5)"/>
<use href="#i-smap" transform="translate(1545.2,330.5)"/>
<use href="#i-azmap" transform="translate(1577.6,330.5)"/>
<use href="#i-gauge" transform="translate(1610,330.5)"/>
<use href="#i-card" transform="translate(1448,363)"/>
<use href="#i-mcard" transform="translate(1480.4,363)"/>
<use href="#i-kpi" transform="translate(1512.8,363)"/>
<use href="#i-slicer" transform="translate(1545.2,363)"/>
<use href="#i-table" transform="translate(1577.6,363)"/>
<use href="#i-matrix" transform="translate(1610,363)"/>
<use href="#i-r" transform="translate(1448,395.5)"/>
<use href="#i-py" transform="translate(1480.4,395.5)"/>
<use href="#i-keyinf" transform="translate(1512.8,395.5)"/>
<use href="#i-decomp" transform="translate(1545.2,395.5)"/>
<use href="#i-qna" transform="translate(1577.6,395.5)"/>
<use href="#i-narr" transform="translate(1610,395.5)"/>
<use href="#i-trophy" transform="translate(1448,428)"/>
<use href="#i-pagin" transform="translate(1480.4,428)"/>
<use href="#i-ncard" transform="translate(1512.8,428)"/>
<use href="#i-nslicer" transform="translate(1545.2,428)"/>
<use href="#i-bslicer" transform="translate(1577.6,428)"/>
<use href="#i-lslicer" transform="translate(1610,428)"/>
<use href="#i-arcgis" transform="translate(1448,460.5)"/>
<use href="#i-papps" transform="translate(1480.4,460.5)"/>
<use href="#i-pauto" transform="translate(1512.8,460.5)"/>
<path d="M1475 226q3-4 17-4q15 0 15 9v26q-1 7-16 7q-16 0-16-9z" fill="#fff200" style="mix-blend-mode:multiply"/>
<g fill="#323130"><circle cx="1551" cy="471" r="1.3"/><circle cx="1557" cy="471" r="1.3"/><circle cx="1563" cy="471" r="1.3"/></g>
<use href="#i-sbar" transform="translate(868,59) scale(0.87)"/>
<use href="#i-scol" transform="translate(900.7,59) scale(0.87)"/>
<use href="#i-cbar" transform="translate(933.4,59) scale(0.87)"/>
<use href="#i-ccol" transform="translate(966.1,59) scale(0.87)"/>
<use href="#i-lscol" transform="translate(998.8,59) scale(0.87)"/>
<use href="#i-lccol" transform="translate(1031.5,59) scale(0.87)"/>
<use href="#i-line" transform="translate(1064.2,59) scale(0.87)"/>
<use href="#i-area" transform="translate(1096.9,59) scale(0.87)"/>
<use href="#i-slicer" transform="translate(1129.6,59) scale(0.87)"/>
<use href="#i-pie" transform="translate(868,96) scale(0.87)"/>
<use href="#i-donut" transform="translate(900.7,96) scale(0.87)"/>
<use href="#i-treemap" transform="translate(933.4,96) scale(0.87)"/>
<use href="#i-globe" transform="translate(966.1,96) scale(0.87)"/>
<use href="#i-gauge" transform="translate(998.8,96) scale(0.87)"/>
<use href="#i-card" transform="translate(1031.5,96) scale(0.87)"/>
<use href="#i-mcard" transform="translate(1064.2,96) scale(0.87)"/>
<use href="#i-table" transform="translate(1096.9,96) scale(0.87)"/>
<use href="#i-matrix" transform="translate(1129.6,96) scale(0.87)"/>
</svg>
<!-- FILTERS collapsed -->
<div class="t" style="left:1399px;top:231px;font-size:17px;font-weight:bold;color:#252423;transform-origin:0 0;transform:translate(18px,0) rotate(90deg)">Filters</div>
<svg width="40" height="60" style="left:1390px;top:160px" viewBox="0 0 40 60">
 <path d="M18 9l-7 7 7 7M24 9l-7 7 7 7" fill="none" stroke="#323130" stroke-width="1.4"/>
 <path d="M21 49.5h-7.5v4h7.5M20 56l5.5 4" fill="none" stroke="#323130" stroke-width="1.4"/>
</svg>

<!-- BUILD pane -->
<div class="t" style="left:1438px;top:168px;font-size:19px;font-weight:bold;color:#252423">Build</div>
<svg width="240" height="60" style="left:1428px;top:160px" viewBox="0 0 240 60">
 <g fill="#323130"><circle cx="173" cy="17" r="1.5"/><circle cx="180" cy="17" r="1.5"/><circle cx="187" cy="17" r="1.5"/></g>
 <path d="M202 10l7 7-7 7M208 10l7 7-7 7" fill="none" stroke="#323130" stroke-width="1.3"/>
 <path d="M27 56q3 3 6 0M37 56q3 3 6 0" fill="none" stroke="#323130" stroke-width="1.8"/>
</svg>
<!-- gallery box -->

<!-- scrollbar -->
<div class="a" style="left:1646px;top:200px;width:7px;height:640px;background:#8a8886;border-radius:3px"></div>

<!-- wells -->
<div class="t" style="left:1438px;top:505px;font-size:14px;color:#252423">X-axis</div>
<div class="a" style="left:1438px;top:527px;width:205px;height:91px;border:1px dashed #605e5c;border-radius:4px;background:#fff"></div>
<div class="a pill" style="left:1444px;top:533px;width:193px;height:37px"></div>
<div class="t" style="left:1452px;top:546px;font-size:14px;color:#252423">Country</div>
<div class="a add" style="left:1444px;top:575px;width:193px;height:37px"></div>
<div class="t c" style="left:1540px;top:587px;font-size:14px;font-weight:bold;color:#252423">+Add data</div>

<div class="t" style="left:1438px;top:631px;font-size:14px;color:#252423">Y-axis</div>
<div class="a" style="left:1438px;top:653px;width:205px;height:133px;border:1px dashed #605e5c;border-radius:4px;background:#fff"></div>
<div class="a pill" style="left:1444px;top:659px;width:193px;height:37px"></div>
<div class="t" style="left:1452px;top:672px;font-size:14px;color:#252423">Sum of GDP (B...</div>
<div class="a pill" style="left:1444px;top:701px;width:193px;height:37px"></div>
<div class="t" style="left:1452px;top:714px;font-size:14px;color:#252423">Sum of Popula...</div>
<div class="a add" style="left:1444px;top:743px;width:193px;height:37px"></div>
<div class="t c" style="left:1540px;top:755px;font-size:14px;font-weight:bold;color:#252423">+Add data</div>

<div class="t" style="left:1438px;top:799px;font-size:14px;color:#252423">Legend</div>
<div class="a" style="left:1438px;top:821px;width:205px;height:49px;border:1px dashed #605e5c;border-radius:4px;background:#fff"></div>
<div class="a add" style="left:1444px;top:827px;width:193px;height:37px"></div>
<div class="t c" style="left:1540px;top:839px;font-size:14px;font-weight:bold;color:#252423">+Add data</div>

<div class="t" style="left:1438px;top:883px;font-size:14px;color:#252423">Small multiples</div>
<div class="a" style="left:1438px;top:905px;width:205px;height:28px;border:1px dashed #605e5c;border-bottom:none;border-radius:4px 4px 0 0;background:#fff"></div>
<div class="a add" style="left:1444px;top:911px;width:193px;height:22px;border-bottom:none;border-radius:4px 4px 0 0"></div>
<div class="a" style="left:1439px;top:923px;width:203px;height:10px;overflow:hidden"><div class="t c" style="left:101px;top:0;font-size:14px;font-weight:bold;color:#252423">+Add data</div></div>

<svg width="80" height="200" style="left:1570px;top:540px" viewBox="0 0 80 200">
 <g fill="none" stroke="#252423" stroke-width="1.5">
  <path d="M5 6l13 13M18 6L5 19M5 132l13 13M18 132L5 145M5 174l13 13M18 174L5 187"/>
  <path d="M47 7l6 5.5-6 5.5M47 133l6 5.5-6 5.5M47 175l6 5.5-6 5.5"/>
 </g>
 <path d="M30.5 3v20M30.5 129v20M30.5 171v20" stroke="#605e5c" stroke-width="1"/>
</svg>

<!-- tooltip -->
<div class="a" style="left:1411px;top:177px;width:161px;height:40px;background:#fff;border-radius:4px;box-shadow:0 2px 8px rgba(0,0,0,.2)"></div>
<svg width="20" height="10" style="left:1480px;top:216px" viewBox="0 0 20 10"><path d="M0 0h20L10 8z" fill="#fff"/></svg>
<div class="t" style="left:1420px;top:190px;font-size:14.5px;color:#252423">Stacked column chart</div>
<!-- DATA pane -->
<div class="t" style="left:1664px;top:168px;font-size:19px;font-weight:bold;color:#252423">Data</div>
<svg width="70" height="30" style="left:1818px;top:163px" viewBox="0 0 70 30">
 <g fill="#323130"><circle cx="9" cy="14" r="1.5"/><circle cx="16" cy="14" r="1.5"/><circle cx="23" cy="14" r="1.5"/></g>
 <path d="M36 7l7 7-7 7M42 7l7 7-7 7" fill="none" stroke="#323130" stroke-width="1.3"/>
</svg>
<div class="a" style="left:1660px;top:210px;width:213px;height:30px;background:#fff;border:1px solid #8a8886;border-bottom-color:#605e5c;border-radius:4px"></div>
<svg width="30" height="30" style="left:1670px;top:212px" viewBox="0 0 30 30"><circle cx="12.5" cy="12.5" r="6" fill="none" stroke="#323130" stroke-width="1.3"/><path d="M17 17l5 5" stroke="#323130" stroke-width="1.3"/></svg>
<div class="t" style="left:1701px;top:217px;font-size:16px;color:#605e5c">Search</div>
<div class="a" style="left:1864px;top:250px;width:9px;height:105px;background:#8a8886;border-radius:1px"></div>
<div class="t dt" style="left:1713px;top:260.0px">Ashishdata</div>
<div class="t dt" style="left:1713px;top:290.0px">Branch details</div>
<div class="t dt" style="left:1713px;top:320.0px">Calculated Table</div>
<div class="t dt" style="left:1713px;top:350.0px">Class</div>
<div class="t dt" style="left:1713px;top:380.0px">Countries</div>
<div class="t dt" style="left:1757px;top:410.0px">Area (sq km)</div>
<div class="t dt" style="left:1757px;top:440.0px">Country</div>
<div class="t dt" style="left:1757px;top:470.0px">GDP (Billion U...</div>
<div class="t dt" style="left:1757px;top:500.0px">Literacy Rate (...</div>
<div class="t dt" style="left:1757px;top:530.0px">Population (M...</div>
<div class="t dt" style="left:1757px;top:560.0px">Year</div>
<div class="t dt" style="left:1713px;top:590.0px">Countries Average T...</div>
<div class="t dt" style="left:1713px;top:620.0px">Countrylist</div>
<div class="t dt" style="left:1713px;top:650.0px">Customers</div>
<div class="t dt" style="left:1713px;top:680.0px">CustomersData</div>
<div class="t dt" style="left:1713px;top:710.0px">Data1</div>
<div class="t dt" style="left:1713px;top:740.0px">Data2</div>
<div class="t dt" style="left:1713px;top:770.0px">DATESBETWEEN Table</div>
<div class="t dt" style="left:1713px;top:800.0px">DATESINPERIOD Table</div>
<div class="t dt" style="left:1713px;top:830.0px">DATESMTD Table</div>
<div class="t dt" style="left:1713px;top:860.0px">df</div>
<div class="t dt" style="left:1713px;top:890.0px">DISTINCT Values Table</div>
<div class="t dt" style="left:1713px;top:920.0px">Filtered Table</div>
<svg width="1918" height="967" style="left:0;top:0" viewBox="0 0 1918 967">
<path d="M1675 260.5l5.5 6-5.5 6" class="chev"/>
<use href="#d-tbl" x="1690" y="258.5"/>
<path d="M1675 290.5l5.5 6-5.5 6" class="chev"/>
<use href="#d-tbl" x="1690" y="288.5"/>
<path d="M1675 320.5l5.5 6-5.5 6" class="chev"/>
<use href="#d-calc" x="1690" y="318.5"/>
<path d="M1675 350.5l5.5 6-5.5 6" class="chev"/>
<use href="#d-calc" x="1690" y="348.5"/>
<path d="M1671 383.5l7 6.5 7-6.5" class="chev"/>
<use href="#d-tbl" x="1690" y="378.5"/>
<circle cx="1705" cy="394.0" r="7" fill="#117865"/><path d="M1702 394.0l2 2 3.5-3.5" fill="none" stroke="#fff" stroke-width="1.4"/>
<rect x="1709.5" y="409.5" width="14" height="14" rx="2" fill="#fff" stroke="#605e5c" stroke-width="1"/>
<path d="M1747.5 410.5h-12l6 6.5-6 6.5h12.5" fill="none" stroke="#252423" stroke-width="1.3"/>
<rect x="1709" y="439.0" width="15" height="15" rx="2" fill="#117865"/><path d="M1712.5 446.5l3 3 5.5-6" fill="none" stroke="#fff" stroke-width="1.5"/>
<rect x="1709" y="469.0" width="15" height="15" rx="2" fill="#117865"/><path d="M1712.5 476.5l3 3 5.5-6" fill="none" stroke="#fff" stroke-width="1.5"/>
<path d="M1747.5 470.5h-12l6 6.5-6 6.5h12.5" fill="none" stroke="#252423" stroke-width="1.3"/>
<rect x="1709.5" y="499.5" width="14" height="14" rx="2" fill="#fff" stroke="#605e5c" stroke-width="1"/>
<path d="M1747.5 500.5h-12l6 6.5-6 6.5h12.5" fill="none" stroke="#252423" stroke-width="1.3"/>
<rect x="1709" y="529.0" width="15" height="15" rx="2" fill="#117865"/><path d="M1712.5 536.5l3 3 5.5-6" fill="none" stroke="#fff" stroke-width="1.5"/>
<path d="M1747.5 530.5h-12l6 6.5-6 6.5h12.5" fill="none" stroke="#252423" stroke-width="1.3"/>
<rect x="1709.5" y="559.5" width="14" height="14" rx="2" fill="#fff" stroke="#605e5c" stroke-width="1"/>
<path d="M1747.5 560.5h-12l6 6.5-6 6.5h12.5" fill="none" stroke="#252423" stroke-width="1.3"/>
<path d="M1675 590.5l5.5 6-5.5 6" class="chev"/>
<use href="#d-calc" x="1690" y="588.5"/>
<path d="M1675 620.5l5.5 6-5.5 6" class="chev"/>
<use href="#d-tbl" x="1690" y="618.5"/>
<path d="M1675 650.5l5.5 6-5.5 6" class="chev"/>
<use href="#d-tbl" x="1690" y="648.5"/>
<path d="M1675 680.5l5.5 6-5.5 6" class="chev"/>
<use href="#d-tbl" x="1690" y="678.5"/>
<path d="M1675 710.5l5.5 6-5.5 6" class="chev"/>
<use href="#d-tbl" x="1690" y="708.5"/>
<path d="M1675 740.5l5.5 6-5.5 6" class="chev"/>
<use href="#d-tbl" x="1690" y="738.5"/>
<path d="M1675 770.5l5.5 6-5.5 6" class="chev"/>
<use href="#d-calc" x="1690" y="768.5"/>
<path d="M1675 800.5l5.5 6-5.5 6" class="chev"/>
<use href="#d-calc" x="1690" y="798.5"/>
<path d="M1675 830.5l5.5 6-5.5 6" class="chev"/>
<use href="#d-calc" x="1690" y="828.5"/>
<path d="M1675 860.5l5.5 6-5.5 6" class="chev"/>
<use href="#d-tbl" x="1690" y="858.5"/>
<path d="M1675 890.5l5.5 6-5.5 6" class="chev"/>
<use href="#d-calc" x="1690" y="888.5"/>
<path d="M1675 920.5l5.5 6-5.5 6" class="chev"/>
<use href="#d-calc" x="1690" y="918.5"/>
</svg>


<!-- RIGHT RAIL -->
<div class="a" style="left:1880px;top:903px;width:38px;height:40px;background:#f3f2f1;border-top:1px solid #e1dfdd"></div>

<div class="a" style="left:1880px;top:154px;width:38px;height:38px;background:#e6e5e4;border:1px solid #a19f9d;border-right:none"></div>
<div class="a" style="left:1880px;top:193px;width:38px;height:39px;background:#e6e5e4;border:1px solid #a19f9d;border-right:none"></div>
<svg width="40" height="800" style="left:1880px;top:150px" viewBox="0 0 40 800">
 <g fill="none" stroke="#323130" stroke-width="1.4">
  <ellipse cx="20" cy="15.5" rx="9" ry="3.5"/>
  <path d="M11 15.5v15q0 3.5 9 3.5t9-3.5v-15"/>
  <path d="M10.5 75V63h5v12M15.5 75V53h6v9M10.5 75h9M21.5 56h5v5"/>
  <path d="M10.5 115V103h5v12M15.5 103V93.5h6v9M21.5 96.5h5v3"/>
  <path d="M13.5 154.5v-22h13v22l-6.5-6z"/>
  <path d="M19 174v4h11v-4M16 182v-12h13v6"/>
  <path d="M10 234v-10h11M10 234h9"/>
  <path d="M20 252v21M9.5 262.5h21"/>
 </g>
 <ellipse cx="28" cy="63.5" rx="5" ry="2" fill="#fff" stroke="#d86c00" stroke-width="1.3"/>
 <path d="M23 63.5v10q5 3 10 0v-10" fill="#fff" stroke="#d86c00" stroke-width="1.3"/>
 <path d="M33 96l-10 12" stroke="#323130" stroke-width="1.5"/>
 <path d="M10 115.5q3.5 0 5.5-4q2-3.5 5.5-3.5l2.5 2.5q-1 5-6.5 7q-3.5 1-7-2z" fill="#62a8e5" stroke="#1571c6" stroke-width="1"/>
 <path d="M9 180a7 7 0 0 1 11.5-5.5M21.5 181a7 7 0 0 1-11.5 4" fill="none" stroke="#2c9a45" stroke-width="1.6"/>
 <path d="M20 171v4h-4M10 189v-4h4" fill="none" stroke="#2c9a45" stroke-width="1.4"/>
 <path d="M21 179h11l-4 4.5v6h-3v-6z" fill="#fff" stroke="#323130" stroke-width="1.3"/>
 <rect x="20" y="212" width="12" height="12" fill="#fbd38d" stroke="#d86c00" stroke-width="1.2"/>
 <path d="M22.5 215l10 11.5h-5l3 4.5-2.2 1.3-3-4.5-2.8 3.5z" fill="#fff" stroke="#323130" stroke-width="1.1"/>
 <g transform="translate(20,773)" fill="none" stroke="#323130" stroke-width="1.4">
  <circle r="4"/>
  <path d="M-2.5-10.5h5l1 3 3 1.7 3-1 2.5 4.4-2.2 2.2v3.4l2.2 2.2-2.5 4.4-3-1-3 1.7-1 3h-5l-1-3-3-1.7-3 1-2.5-4.4 2.2-2.2v-3.4l-2.2-2.2 2.5-4.4 3 1 3-1.7z"/>
 </g>
</svg>
<div class="a" style="left:1879px;top:945px;width:39px;height:0;"></div>

<!-- BOTTOM BAR -->
<div class="a" style="left:211px;top:899px;width:465px;height:44px;background:#fff"></div>
<div class="a" style="left:210px;top:899px;width:1px;height:44px;background:#a19f9d"></div>
<div class="a" style="left:438px;top:899px;width:1px;height:44px;background:#e1dfdd"></div>
<div class="a" style="left:439px;top:938px;width:237px;height:5px;background:#117865"></div>
<div class="a" style="left:677px;top:899px;width:48px;height:44px;background:#117865"></div>
<svg width="30" height="30" style="left:686px;top:906px" viewBox="0 0 30 30"><path d="M15 8v14M8 15h14" stroke="#fff" stroke-width="3.5"/></svg>
<div class="t c" style="left:324px;top:914px;font-size:15px;color:#252423">Column chart in Power BI-I</div>
<div class="t c" style="left:557px;top:914px;font-size:15px;color:#252423;-webkit-text-stroke:.35px #252423">Column chart in Power BI-II</div>
<div class="a" style="left:64px;top:934px;width:30px;height:3px;background:#117865;border-radius:2px"></div>
<svg width="160" height="40" style="left:50px;top:900px" viewBox="0 0 160 40">
 <g fill="none" stroke="#484644" stroke-width="1.4">
  <rect x="16.5" y="8.5" width="23" height="15"/>
  <path d="M28 24v3M23 27.5h10"/>
  <rect x="76.5" y="5.5" width="14" height="24" rx="2"/>
 </g>
 <rect x="82" y="25" width="3" height="1.5" fill="#484644"/>
 <path d="M125 15v10l-5-5z M145 15v10l5-5z" fill="#c8c6c4"/>
</svg>
<div class="t" style="left:5px;top:953px;font-size:15px;color:#605e5c">Page 2 of 2</div>

<div class="a" style="left:0;top:943px;width:1918px;height:24px;background:#f3f2f1;border-top:1px solid #e1dfdd"></div>
<!-- zoom slider -->
<svg width="270" height="24" style="left:1648px;top:945px" viewBox="0 0 270 24">
 <path d="M7 13h5" stroke="#323130" stroke-width="1.2"/>
 <path d="M19 13h125" stroke="#605e5c" stroke-width="1"/>
 <rect x="65" y="7" width="6" height="12" fill="#605e5c"/>
 <path d="M81 10v6" stroke="#605e5c" stroke-width="1"/>
 <path d="M150 13h11M155.5 7.5v11" stroke="#323130" stroke-width="1.3"/>
 <path d="M230 11v-4.5h4.5M244 6.5h4.5v4.5M248.5 15.5v4.5h-4.5M234.5 20h-4.5v-4.5" fill="none" stroke="#323130" stroke-width="1.6"/>
 <path d="M234.5 6.5h9.5M234.5 20h9.5" stroke="#605e5c" stroke-width=".8"/>
</svg>
<div class="t" style="left:1824px;top:950px;font-size:14px;color:#605e5c">82%</div>
<div class="a" style="left:0;top:153px;width:1918px;height:7px;background:linear-gradient(rgba(0,0,0,.13),rgba(0,0,0,.04) 45%,rgba(0,0,0,0))"></div>
</body></html>
